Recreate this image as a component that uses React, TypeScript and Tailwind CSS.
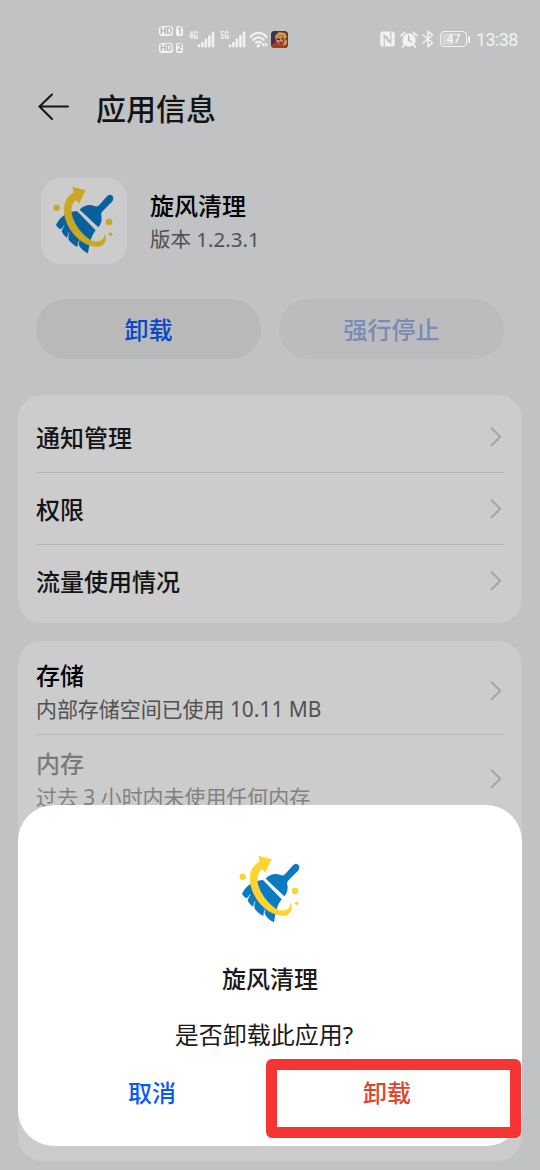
import clsx from 'clsx';
import React from 'react';

const settings = ['通知管理', '权限', '流量使用情况'];

const usage = [
  { name: '存储', description: '内部存储空间已使用 10.11 MB', disabled: false },
  { name: '内存', description: '过去 3 小时内未使用任何内存', disabled: true }
];

function BroomIcon() {
  return (
    <svg className="shrink-0" width="90" height="90" viewBox="0 0 270 270" fill="none">
      <path d="M122 101C134 88 152 84 166 90C172 92 176 92 180 88L204 61C216 48 230 64 219 77L192 104C187 109 185 113 187 120C190 133 185 147 178 154Z" fill="#0b7ac3" />
      <path d="M114 105L170 163C157 180 153 196 147 232C136 227 127 219 121 210L119 202L115 213C104 208 94 199 88 190L87 180L83 185C77 180 72 174 68 167L71 155L63 160C58 156 54 152 51 147C60 127 81 107 114 105Z" fill="#0b7ac3" />
      <path d="M67 164C69 158 72 153 76 148M87 190C86 182 87 177 90 170M117 211C117 204 118 200 121 194" stroke="#fff" strokeWidth="2.5" />
      <path d="M101 34L139 43L120 82L112 71C98 80 94 98 98 117C105 147 131 178 152 191C174 205 195 195 198 176C204 202 190 213 168 211C126 207 90 166 79 126C70 92 79 61 105 50Z" fill="#fdd32f" stroke="#fdd32f" strokeWidth="2" strokeLinejoin="round" />
      <circle cx="53" cy="95" r="9.5" fill="#fdd32f" />
      <circle cx="210" cy="138" r="10" fill="#fdd32f" />
      <circle cx="215" cy="175" r="5.5" fill="#fdd32f" />
    </svg>
  );
}

function Chevron() {
  return (
    <svg className="mr-[2.5px] shrink-0" width="12" height="20" viewBox="0 0 12 20" fill="none">
      <path d="M1.6 1.2L10.3 9.7L1.6 18.2" stroke="#cdcdcd" strokeWidth="2" strokeLinecap="round" strokeLinejoin="round" />
    </svg>
  );
}

function HdBadge({ sim }: { sim: number }) {
  return (
    <div className="flex gap-[3px] font-['Roboto'] text-[9px] leading-[10.5px] font-bold text-[#b3b4b5]">
      <span className="w-[14px] h-[10px] rounded-[3px] bg-[#f2f2f2] text-center">HD</span>
      <span className="w-[7px] h-[10px] rounded-[2px] rounded-tr-[4px] bg-[#f2f2f2] text-center">{sim}</span>
    </div>
  );
}

function Signal({ label }: { label: string }) {
  return (
    <svg width="26" height="25" viewBox="0 -4 26 25">
      <text x="0.3" y="7.8" fontSize="10" fontWeight="700" fontFamily="Roboto, sans-serif" textLength="8.6" lengthAdjust="spacingAndGlyphs" fill="#f2f2f2">{label}</text>
      <path d="M10 14.6V15.2M13.4 12V15.2M16.9 8.7V15.2M20.4 5.3V15.2M24 1.8V15.2" stroke="#f2f2f2" strokeWidth="2.6" strokeLinecap="round" />
    </svg>
  );
}

function StatusBar() {
  return (
    <div className="relative z-20 flex h-[78px] items-center pl-[159px] pr-[21px] text-[#f2f2f2]">
      <div className="flex flex-col gap-[7px]">
        <HdBadge sim={1} />
        <HdBadge sim={2} />
      </div>
      <div className="ml-[6px] flex gap-[5px]">
        <Signal label="4G" />
        <Signal label="5G" />
      </div>
      <svg className="ml-[3px]" width="20" height="17" viewBox="0 0 20 17" fill="none">
        <path d="M1.5 6C6 .5 13 .5 17.5 6M4.3 9C7.5 5.4 11.7 5.4 14.8 9M7 11.8C8.5 10.2 10.6 10.2 12 11.8" stroke="#f2f2f2" strokeWidth="2.2" strokeLinecap="round" />
        <circle cx="9.4" cy="14.8" r="1.7" fill="#f2f2f2" />
        <path d="M15.3 11.5V16L12.5 13.8ZM16.3 11.5V16L19 13.8Z" fill="#f2f2f2" />
      </svg>
      <svg className="ml-[2px]" width="17" height="17" viewBox="0 0 17 17">
        <rect width="17" height="17" rx="3.5" fill="#6b3024" />
        <path d="M0 4Q1 0 4 0H7L3 6L4 11L0 12Z" fill="#353750" />
        <path d="M4 5L8 1L14 2L16 6L13 9L12 4L7 5L5 9Z" fill="#d99a45" />
        <path d="M6 6L11 4L13 8L11 13L8 14L5 10Z" fill="#c98a6c" />
        <path d="M6 8L9 8.5M10.5 8L12.5 7.5M8 12L11 11.5" stroke="#5a2019" strokeWidth="1.4" />
        <path d="M1 15L4 11L8 15L13 12L16 14L14 17H3Z" fill="#a83a24" />
        <path d="M13 10L16 8V13L12 15Z" fill="#dc9345" />
      </svg>

      <div className="ml-auto flex items-center">
        <svg width="15" height="16" viewBox="0 0 15 16" fill="none">
          <rect x="0.3" y="0.5" width="14.4" height="15" rx="2.5" fill="#f2f2f2" />
          <path d="M4.2 15.5V4.2L9 11.2M6 4.8L10.8 11.8V.5" stroke="#bfc0c1" strokeWidth="1.2" />
        </svg>
        <svg className="ml-[5px]" width="18" height="17" viewBox="0 0 18 17" fill="none">
          <circle cx="9" cy="9" r="6.7" fill="#f2f2f2" />
          <path d="M1.2 4.5L4.5 1.3M16.8 4.5L13.5 1.3M4.3 14L2.7 16M13.7 14L15.3 16" stroke="#f2f2f2" strokeWidth="1.8" strokeLinecap="round" />
          <path d="M8.7 5V9.3L12 11" stroke="#bbbcbd" strokeWidth="1.4" strokeLinecap="round" />
        </svg>
        <svg className="ml-[4px]" width="12" height="18" viewBox="0 0 12 18" fill="none">
          <path d="M1.2 5L10.5 13L6 16.7V1.3L10.5 5L1.2 13" stroke="#f2f2f2" strokeWidth="1.6" strokeLinecap="round" strokeLinejoin="round" />
        </svg>
        <div className="ml-[6px] flex h-[16px] w-[27px] rounded-[4px] border-[1.5px] border-[#f2f2f2] p-[1px]">
          <div className="w-full rounded-[2px] bg-linear-to-r from-[#d2d3d4] from-47% to-[#c1c3c4] to-47% text-center font-['Roboto'] text-[12.5px] leading-[12px] font-medium">47</div>
        </div>
        <div className="ml-[1px] h-[7px] w-[2px] rounded-full bg-[#f2f2f2]"></div>
        <span className="ml-[6px] w-[43px] whitespace-nowrap pt-[2px] font-['Roboto'] text-[18px] leading-6 tracking-[-0.6px]">13:38</span>
      </div>
    </div>
  );
}

function UninstallDialog() {
  return (
    <div className="absolute left-[18px] top-[805px] z-20 h-[341px] w-[504px] rounded-[36px] bg-white px-[18px] pt-[40px] text-center text-[24px] leading-9 text-[#1a1a1a]">
      <div className="flex justify-center">
        <BroomIcon />
      </div>
      <h2 className="mt-[26px] font-medium">旋风清理</h2>
      <p className="mt-[20px] pr-[12px]">是否卸载此应用?</p>
      <div className="mt-[22px] flex font-medium">
        <button className="w-[234px] pr-[2px] text-[#0a59f7]">取消</button>
        <button className="w-[234px] text-[#e0452b]">卸载</button>
      </div>
      <div className="absolute left-[248px] top-[254px] h-[79px] w-[255px] rounded-[6px] border-[11px] border-[#f73434]"></div>
    </div>
  );
}

function App() {
  return (
    <main className="relative h-[1170px] w-[540px] overflow-hidden bg-[#f1f3f4] font-['Noto_Sans','Noto_Sans_CJK_SC',sans-serif] text-black">
      <StatusBar />
      <header className="flex h-[60px] items-center pl-[38px]">
        <svg width="32" height="30" viewBox="0 0 32 30" fill="none">
          <path d="M14 1.5L1.5 13.5L14 26M2 13.5H30" stroke="#1a1a1a" strokeWidth="2" strokeLinecap="round" />
        </svg>
        <h1 className="ml-[26px] pt-px text-[30px] leading-10 font-medium text-[#1a1a1a]">应用信息</h1>
      </header>

      <section className="mt-[40px] flex items-center pl-[41px]">
        <div className="flex h-[86px] w-[86px] items-center justify-center rounded-[20px] bg-white">
          <BroomIcon />
        </div>
        <div className="ml-[23px] pt-px">
          <h2 className="text-[24px] leading-[35px] font-medium">旋风清理</h2>
          <p className="text-[20.5px] leading-8 text-[#666]">版本 1.2.3.1</p>
        </div>
      </section>

      <div className="mt-[34.5px] flex gap-[18px] px-[36px] text-[24px] font-medium text-[#0a59f7]">
        <button className="h-[60px] flex-1 rounded-full bg-[#e6e8e7] pt-[2px]">卸载</button>
        <button className="h-[60px] flex-1 rounded-full bg-[#ebecef] pt-[2px] text-[#94aee3]">强行停止</button>
      </div>

      <ul className="mx-[18px] mt-[36px] rounded-[24px] bg-white px-[18px] pt-[6.5px] pb-[5.5px]">
        {settings.map((name, i) => (
          <li key={name} className={clsx('flex h-[72px] items-center justify-between text-[24px] font-medium text-[#1a1a1a]', i < settings.length - 1 && 'border-b border-[#e3e3e3]')}>
            <span className="pt-[2px]">{name}</span>
            <Chevron />
          </li>
        ))}
      </ul>

      <ul className="mx-[18px] mt-[18px] h-[520px] rounded-[24px] bg-white px-[18px] pt-[6.5px]">
        {usage.map((item) => (
          <li key={item.name} className="flex h-[88px] items-center justify-between border-b border-[#e3e3e3]">
            <div className="pt-[2px]">
              <p className={clsx('text-[24px] leading-[34px] font-medium', item.disabled && 'opacity-40')}>{item.name}</p>
              <p className={clsx('text-[20.95px] leading-8 text-[#666]', item.disabled && 'opacity-60')}>{item.description}</p>
            </div>
            <Chevron />
          </li>
        ))}
      </ul>

      <div className="absolute inset-0 z-10 bg-black/20"></div>
      <UninstallDialog />
    </main>
  );
}

export default App;
